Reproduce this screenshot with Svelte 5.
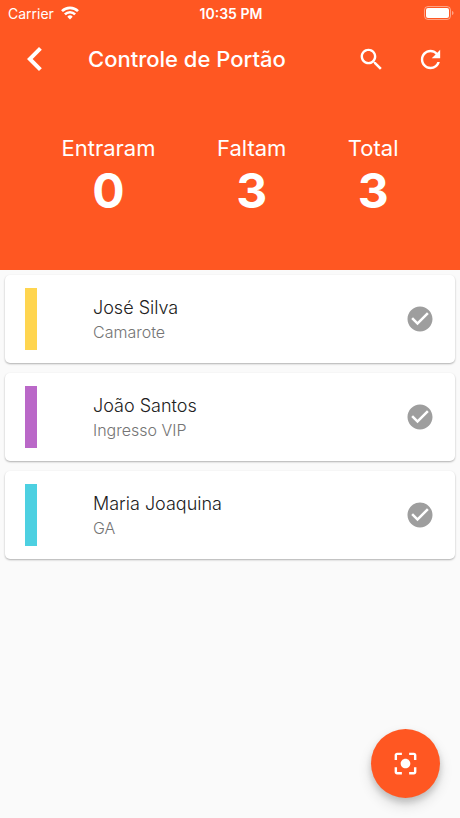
<script>
	let guests = [
		{ name: 'José Silva', ticket: 'Camarote', color: '#ffd54f', entered: false },
		{ name: 'João Santos', ticket: 'Ingresso VIP', color: '#ba68c8', entered: false },
		{ name: 'Maria Joaquina', ticket: 'GA', color: '#4dd0e1', entered: false }
	]

	$: inside = guests.filter(g => g.entered).length
	$: stats = [
		{ label: 'Entraram', value: inside },
		{ label: 'Faltam', value: guests.length - inside },
		{ label: 'Total', value: guests.length }
	]

	const toggle = (guest) => {
		guest.entered = !guest.entered
		guests = guests
	}
</script>

<div class="screen">
	<header>
		<div class="status">
			<div class="carrier">
				<span>Carrier</span>
				<svg width="18" height="14" viewBox="0 0 18 14" fill="none" stroke="#fff" stroke-width="2.6">
					<path d="M1 5.2a11.3 11.3 0 0 1 16 0" />
					<path d="M3.9 8.4a7.2 7.2 0 0 1 10.2 0" />
					<path d="M9 13.4l-2.7-2.7a3.8 3.8 0 0 1 5.4 0z" fill="#fff" stroke="none" />
				</svg>
			</div>
			<time>10:35 PM</time>
			<div class="battery">
				<svg width="30" height="14" viewBox="0 0 30 14">
					<rect x="0.5" y="0.5" width="26" height="13" rx="3.5" fill="none" stroke="#fff" stroke-opacity="0.45" />
					<rect x="2" y="2" width="23" height="10" rx="2" fill="#fff" />
					<path d="M28 5v4c1-.3 1.5-1.1 1.5-2S29 5.3 28 5z" fill="#fff" fill-opacity="0.45" />
				</svg>
			</div>
		</div>

		<nav>
			<button class="back" aria-label="Voltar">
				<svg width="48" height="48" viewBox="0 0 24 24"><path d="M15.41 7.41L14 6l-6 6 6 6 1.41-1.41L10.83 12z" /></svg>
			</button>
			<h1>Controle de Portão</h1>
			<button class="action" aria-label="Buscar">
				<svg width="29" height="29" viewBox="0 0 24 24"><path d="M15.5 14h-.79l-.28-.27C15.41 12.59 16 11.11 16 9.5 16 5.91 13.09 3 9.5 3S3 5.91 3 9.5 5.91 16 9.5 16c1.61 0 3.09-.59 4.23-1.57l.27.28v.79l5 4.99L20.49 19l-4.99-5zm-6 0C7.01 14 5 11.99 5 9.5S7.01 5 9.5 5 14 7.01 14 9.5 11.99 14 9.5 14z" /></svg>
			</button>
			<button class="action" aria-label="Atualizar">
				<svg width="29" height="29" viewBox="0 0 24 24"><path d="M17.65 6.35C16.2 4.9 14.21 4 12 4c-4.42 0-7.99 3.58-7.99 8s3.57 8 7.99 8c3.73 0 6.84-2.55 7.73-6h-2.08c-.82 2.33-3.04 4-5.65 4-3.31 0-6-2.69-6-6s2.69-6 6-6c1.66 0 3.14.69 4.22 1.78L13 11h7V4l-2.35 2.35z" /></svg>
			</button>
		</nav>

		<div class="stats">
			{#each stats as stat}
				<div class="stat">
					<span>{stat.label}</span>
					<strong>{stat.value}</strong>
				</div>
			{/each}
		</div>
	</header>

	<ul>
		{#each guests as guest}
			<li>
				<div class="stripe" style="background: {guest.color}"></div>
				<div class="info">
					<span class="name">{guest.name}</span>
					<span class="ticket">{guest.ticket}</span>
				</div>
				<button class="check" class:entered={guest.entered} aria-label="Confirmar {guest.name}" on:click={() => toggle(guest)}>
					<svg width="30" height="30" viewBox="0 0 24 24"><path d="M12 2C6.48 2 2 6.48 2 12s4.48 10 10 10 10-4.48 10-10S17.52 2 12 2zm-2 15l-5-5 1.41-1.41L10 14.17l7.59-7.59L19 8l-9 9z" /></svg>
				</button>
			</li>
		{/each}
	</ul>

	<button class="fab" aria-label="Ler ingresso">
		<svg width="29" height="29" viewBox="0 0 24 24"><path d="M12 8c-2.21 0-4 1.79-4 4s1.79 4 4 4 4-1.79 4-4-1.79-4-4-4zm-7 7H3v4c0 1.1.9 2 2 2h4v-2H5v-4zM5 5h4V3H5c-1.1 0-2 .9-2 2v4h2V5zm14-2h-4v2h4v4h2V5c0-1.1-.9-2-2-2zm0 16h-4v2h4c1.1 0 2-.9 2-2v-4h-2v4z" /></svg>
	</button>
</div>

<style>
	:global(body) {
		margin: 0;
		background: #fafafa;
	}

	.screen {
		min-height: 100vh;
		font-family: Inter, Roboto, sans-serif;
		color: #212121;
	}

	header {
		background: #ff5722;
		color: #fff;
		padding-bottom: 50px;
	}

	button {
		display: flex;
		align-items: center;
		justify-content: center;
		padding: 0;
		border: none;
		background: none;
		cursor: pointer;
	}

	svg {
		display: block;
	}

	button svg {
		fill: #fff;
	}

	.status {
		display: grid;
		grid-template-columns: 1fr auto 1fr;
		align-items: center;
		height: 26px;
		padding: 0 6px 0 8px;
		font-size: 14px;
	}

	.carrier {
		display: flex;
		align-items: center;
		gap: 7px;
	}

	time {
		font-weight: 600;
	}

	.battery {
		justify-self: end;
	}

	nav {
		display: flex;
		align-items: center;
		height: 66px;
	}

	.back {
		width: 70px;
		height: 66px;
	}

	h1 {
		flex: 1;
		margin: 0;
		padding-left: 18px;
		font-size: 22px;
		font-weight: 500;
		white-space: nowrap;
	}

	.action {
		width: 59px;
		height: 59px;
	}

	.stats {
		display: flex;
		justify-content: space-evenly;
		padding-top: 42px;
	}

	.stat {
		display: flex;
		flex-direction: column;
		align-items: center;
		font-size: 22px;
		line-height: 28px;
	}

	.stat strong {
		font-size: 48px;
		line-height: 58px;
		font-weight: 700;
	}

	ul {
		display: flex;
		flex-direction: column;
		gap: 10px;
		margin: 0;
		padding: 5px;
		list-style: none;
	}

	li {
		display: flex;
		align-items: center;
		height: 88px;
		padding: 0 20px;
		border-radius: 5px;
		background: #fff;
		box-shadow: 0 1px 2px rgba(0, 0, 0, 0.3);
	}

	.stripe {
		width: 12px;
		height: 62px;
	}

	.info {
		display: flex;
		flex: 1;
		flex-direction: column;
		padding: 2px 0 0 56px;
		font-weight: 300;
	}

	.name {
		font-size: 18px;
		line-height: 24px;
	}

	.ticket {
		font-size: 16px;
		line-height: 24px;
		color: #757575;
	}

	.check svg {
		fill: #9e9e9e;
	}

	.check.entered svg {
		fill: #4caf50;
	}

	.fab {
		position: fixed;
		right: 20px;
		bottom: 20px;
		width: 69px;
		height: 69px;
		border-radius: 50%;
		background: #ff5722;
		box-shadow: 0 7px 14px rgba(0, 0, 0, 0.14), 0 4px 7px rgba(0, 0, 0, 0.16);
	}
</style>
